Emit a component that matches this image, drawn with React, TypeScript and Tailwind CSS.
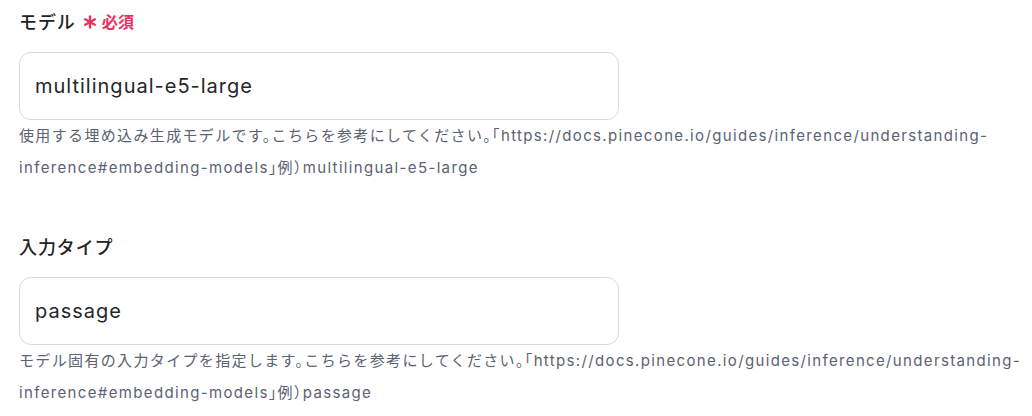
import React from 'react';

type FieldProps = {
  label: string;
  required?: boolean;
  value: string;
  help: string;
};

// required mark: red six-armed asterisk
function Asterisk() {
  return (
    <svg width="14" height="14" viewBox="0 0 14 14" className="shrink-0">
      <g stroke="#e8335f" strokeWidth="2.4" strokeLinecap="round">
        <line x1="7" y1="1.5" x2="7" y2="12.5" />
        <line x1="2.2" y1="4.25" x2="11.8" y2="9.75" />
        <line x1="2.2" y1="9.75" x2="11.8" y2="4.25" />
      </g>
    </svg>
  );
}

function Field({ label, required, value, help }: FieldProps) {
  return (
    <div className="flex flex-col">
      <div className="flex h-7 items-center gap-[7px]">
        <span className="text-[18px] font-medium tracking-wider text-[#1f2328]">{label}</span>
        {required && (
          <span className="flex items-center gap-[5px] text-[#e8335f]">
            <Asterisk />
            <span className="text-[16px] font-semibold tracking-wide">必須</span>
          </span>
        )}
      </div>
      <div className="mt-4 flex h-[68px] w-[600px] items-center rounded-xl border border-[#d5d9e0] bg-white px-[15px]">
        <span className="text-[20px] tracking-wider text-[#24272b]">{value}</span>
      </div>
      {/* halt: half-width punctuation like the original */}
      <p className="w-[1006px] text-[15px] leading-8 tracking-[0.09em] text-[#5b6270] [font-feature-settings:'halt']">
        {help}
      </p>
    </div>
  );
}

export default function App() {
  return (
    <div
      className="flex min-h-[416px] flex-col gap-[49px] bg-white pl-[19px] pt-2"
      style={{ fontFamily: 'Inter, "Noto Sans CJK JP", sans-serif' }}
    >
      <Field
        label="モデル"
        required
        value="multilingual-e5-large"
        help="使用する埋め込み生成モデルです。こちらを参考にしてください。「https://docs.pinecone.io/guides/inference/understanding-inference#embedding-models」例）multilingual-e5-large"
      />
      <Field
        label="入力タイプ"
        value="passage"
        help="モデル固有の入力タイプを指定します。こちらを参考にしてください。「https://docs.pinecone.io/guides/inference/understanding-inference#embedding-models」例）passage"
      />
    </div>
  );
}
